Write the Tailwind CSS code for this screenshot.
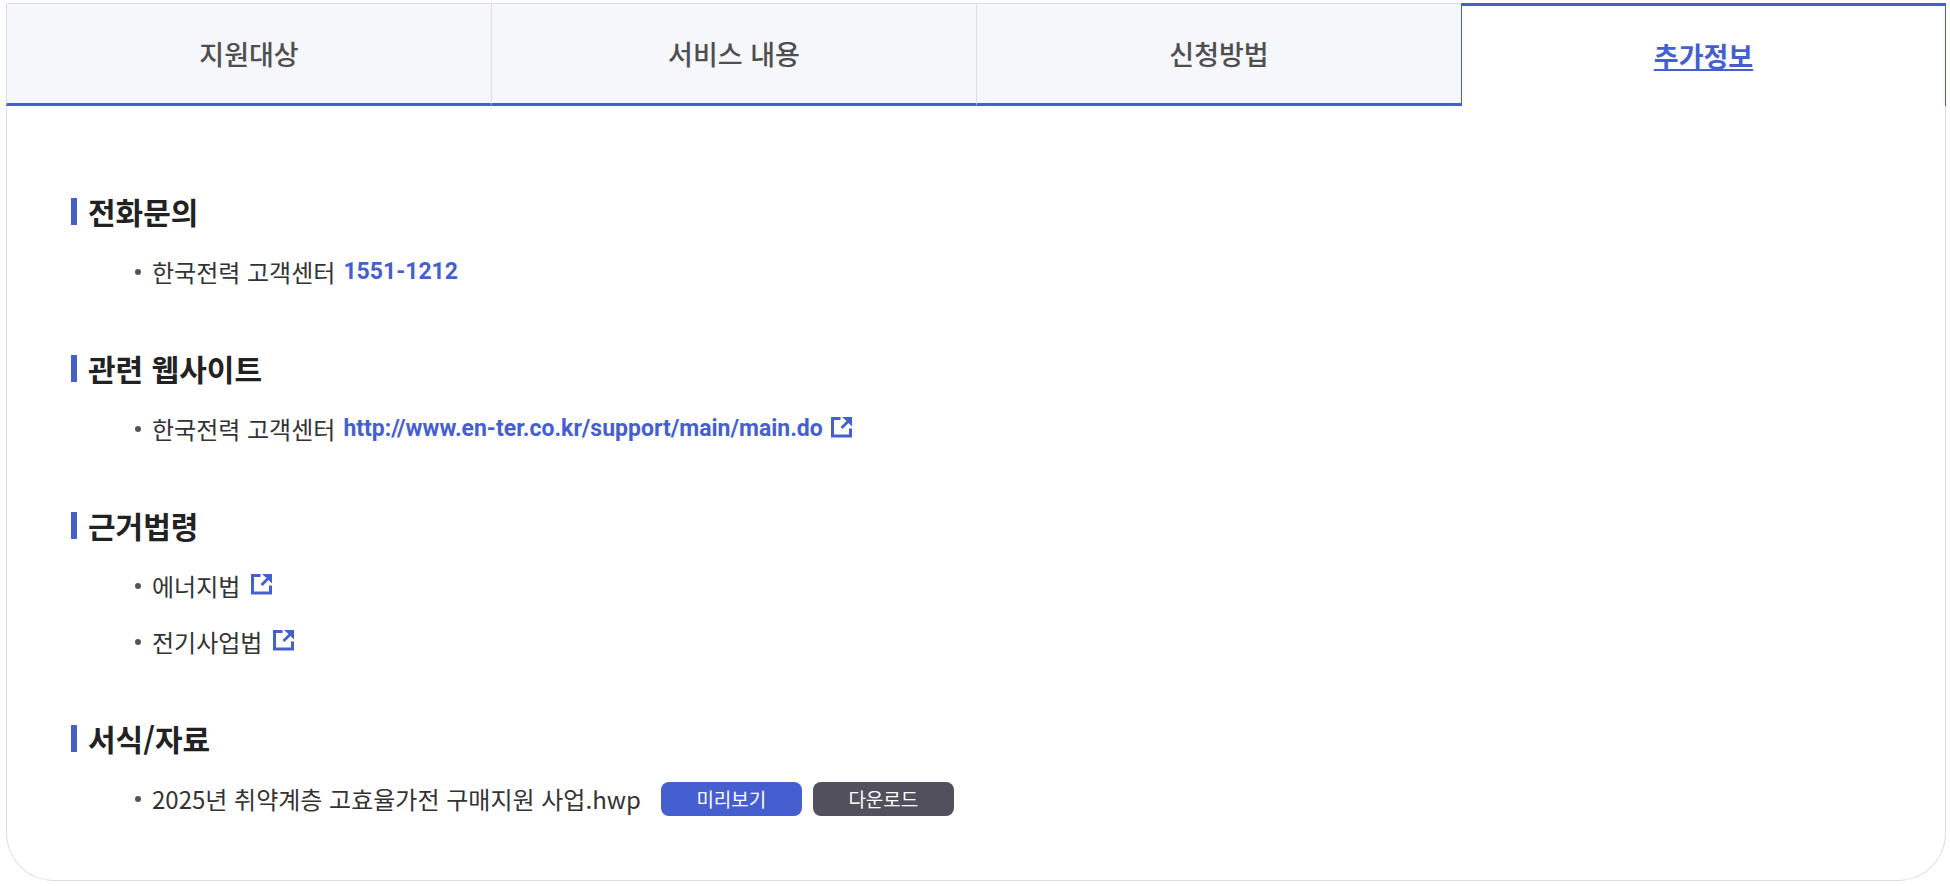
<!DOCTYPE html>
<html lang="ko">
<head>
<meta charset="utf-8">
<meta name="viewport" content="width=device-width, initial-scale=1">
<title>추가정보</title>
<script src="https://cdn.jsdelivr.net/npm/@tailwindcss/browser@4"></script>
</head>
<body class="bg-white pt-[3px] pl-[6px] pr-[4px] pb-1 font-['Noto_Sans_CJK_KR',sans-serif] text-2xl text-[#333]">
<svg class="hidden" aria-hidden="true">
  <symbol id="external" viewBox="0 0 21 21">
    <path d="M9.500 1.500H1.500v17.500h18V11.500" fill="none" stroke="currentColor" stroke-width="3"/>
    <path d="M11 0h10v9.500l-3.500-3.500-6 6-2-2 6-6z" fill="currentColor"/>
  </symbol>
</svg>
<nav class="grid grid-cols-4 h-[103px] text-[27px] font-medium text-[#4f4f4f]" aria-label="서비스 상세">
  <a href="#target" class="flex items-center justify-center bg-[#f5f7fb] border-t border-l border-[#ddd] border-b-3 border-b-[#455fd1]">지원대상</a>
  <a href="#service" class="flex items-center justify-center bg-[#f5f7fb] border-t border-l border-[#ddd] border-b-3 border-b-[#455fd1]">서비스 내용</a>
  <a href="#apply" class="flex items-center justify-center bg-[#f5f7fb] border-t border-l border-[#ddd] border-b-3 border-b-[#455fd1]">신청방법</a>
  <a href="#more" aria-current="page" class="flex items-center justify-center border-t-3 border-x border-[#455fd1] font-bold text-[#455fd1] underline">추가정보</a>
</nav>
<main id="more" class="flex flex-col gap-[46px] rounded-b-[48px] border border-t-0 border-[#ddd] pt-[83px] pb-[53px] px-16">
  <section>
    <h2 class="flex items-center gap-[11px] h-11 text-[30px] font-bold text-[#222]"><span class="w-[6px] h-[27px] bg-[#455fd1]"></span>전화문의</h2>
    <ul class="mt-[11px] pl-16">
      <li class="flex items-center h-14"><span class="size-[6px] mr-[11px] rounded-full bg-[#555]"></span>한국전력 고객센터<a href="tel:1551-1212" class="ml-2 font-[Roboto] text-[23px] font-bold text-[#455fd1]">1551-1212</a></li>
    </ul>
  </section>
  <section>
    <h2 class="flex items-center gap-[11px] h-11 text-[30px] font-bold text-[#222]"><span class="w-[6px] h-[27px] bg-[#455fd1]"></span>관련 웹사이트</h2>
    <ul class="mt-[11px] pl-16">
      <li class="flex items-center h-14"><span class="size-[6px] mr-[11px] rounded-full bg-[#555]"></span>한국전력 고객센터<a href="http://www.en-ter.co.kr/support/main/main.do" class="ml-2 flex items-center gap-2 font-[Roboto] text-[23px] font-bold text-[#455fd1]">http://www.en-ter.co.kr/support/main/main.do<svg class="size-[21px] mb-1" aria-hidden="true"><use href="#external"/></svg></a></li>
    </ul>
  </section>
  <section>
    <h2 class="flex items-center gap-[11px] h-11 text-[30px] font-bold text-[#222]"><span class="w-[6px] h-[27px] bg-[#455fd1]"></span>근거법령</h2>
    <ul class="mt-[11px] pl-16">
      <li class="flex items-center h-14"><span class="size-[6px] mr-[11px] rounded-full bg-[#555]"></span><a href="#energy" class="flex items-center gap-[11px]">에너지법<svg class="size-[21px] mb-1 text-[#455fd1]" aria-hidden="true"><use href="#external"/></svg></a></li>
      <li class="flex items-center h-14"><span class="size-[6px] mr-[11px] rounded-full bg-[#555]"></span><a href="#electric" class="flex items-center gap-[11px]">전기사업법<svg class="size-[21px] mb-1 text-[#455fd1]" aria-hidden="true"><use href="#external"/></svg></a></li>
    </ul>
  </section>
  <section>
    <h2 class="flex items-center gap-[11px] h-11 text-[30px] font-bold text-[#222]"><span class="w-[6px] h-[27px] bg-[#455fd1]"></span>서식/자료</h2>
    <ul class="mt-[11px] pl-16">
      <li class="flex items-center h-14"><span class="size-[6px] mr-[11px] rounded-full bg-[#555]"></span>2025년 취약계층 고효율가전 구매지원 사업.hwp
        <button type="button" class="ml-5 flex h-[34px] w-[141px] items-center justify-center rounded-lg bg-[#455fd1] text-[19px] text-white">미리보기</button>
        <button type="button" class="ml-[11px] flex h-[34px] w-[141px] items-center justify-center rounded-lg bg-[#51505c] text-[19px] text-white">다운로드</button></li>
    </ul>
  </section>
</main>
</body>
</html>
